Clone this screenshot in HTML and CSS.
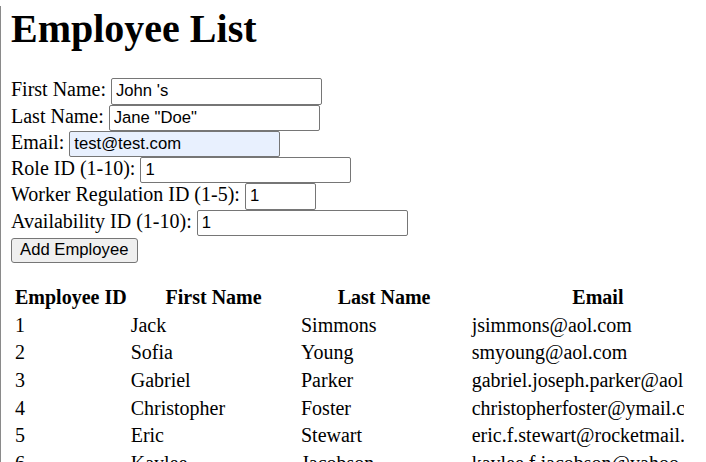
FILE: index.html
```html
<!DOCTYPE html>
<html lang="en">
<head>
<meta charset="utf-8">
<title>Employee List</title>
<link rel="stylesheet" href="styles.css">
</head>
<body>
<div class="page">
  <h1 class="title">Employee List</h1>
  <form class="emp-form">
    <div class="row"><label>First Name:</label><input class="field" type="text" value="John 's"></div>
    <div class="row"><label>Last Name:</label><input class="field" type="text" value="Jane &quot;Doe&quot;"></div>
    <div class="row"><label>Email:</label><input class="field autofill" type="text" value="test@test.com"></div>
    <div class="row"><label>Role ID (1-10):</label><input class="field" type="text" value="1"></div>
    <div class="row"><label>Worker Regulation ID (1-5):</label><input class="field narrow" type="text" value="1"></div>
    <div class="row"><label>Availability ID (1-10):</label><input class="field" type="text" value="1"></div>
    <div class="btn-row"><button class="btn" type="button">Add Employee</button></div>
  </form>
  <div class="table-clip">
    <table class="emp-table">
      <thead>
        <tr><th class="c1">Employee ID</th><th class="c2">First Name</th><th class="c3">Last Name</th><th class="c4">Email</th></tr>
      </thead>
      <tbody>
        <tr><td>1</td><td>Jack</td><td>Simmons</td><td>jsimmons@aol.com</td></tr>
        <tr><td>2</td><td>Sofia</td><td>Young</td><td>smyoung@aol.com</td></tr>
        <tr><td>3</td><td>Gabriel</td><td>Parker</td><td>gabriel.joseph.parker@aol.com</td></tr>
        <tr><td>4</td><td>Christopher</td><td>Foster</td><td>christopherfoster@ymail.com</td></tr>
        <tr><td>5</td><td>Eric</td><td>Stewart</td><td>eric.f.stewart@rocketmail.com</td></tr>
        <tr><td>6</td><td>Kaylee</td><td>Jacobson</td><td>kaylee.f.jacobson@yahoo.com</td></tr>
        <tr><td>7</td><td>Liam</td><td>Brooks</td><td>liam.brooks@aol.com</td></tr>
      </tbody>
    </table>
  </div>
</div>
</body>
</html>
```
FILE: styles.css
```css
html, body {
  margin: 0;
  padding: 0;
  overflow: hidden;
  background: #fff;
}
body {
  font-family: "Liberation Serif", "Times New Roman", serif;
  font-size: 20px;
  color: #000;
}
.page {
  border-left: 1px solid #8a8a8a;
  padding: 0 10px;
  min-height: 462px;
}
.title {
  font-size: 40px;
  font-weight: bold;
  line-height: 46px;
  margin: 5.5px 0 26.8px;
}
.emp-form {
  margin: 0;
}
.row {
  display: flex;
  align-items: baseline;
  gap: 5px;
  height: 26.25px;
  line-height: 23px;
}
.field {
  box-sizing: border-box;
  width: 211px;
  height: 26.25px;
  margin: 0;
  padding: 0 3px 0 4px;
  border: 1px solid #767676;
  border-radius: 2px;
  background: #fff;
  font-family: "Liberation Sans", Arial, sans-serif;
  font-size: 16.67px;
  color: #000;
}
.field.narrow {
  width: 71px;
}
.field.autofill {
  background: #e8f0fe;
}
.btn-row {
  padding-top: 1.5px;
}
.btn {
  box-sizing: border-box;
  height: 25.5px;
  width: 126.5px;
  margin: 0;
  padding: 0 7px;
  border: 1px solid #767676;
  border-radius: 3px;
  background: #efefef;
  font-family: "Liberation Sans", Arial, sans-serif;
  font-size: 16.67px;
  color: #000;
}
.table-clip {
  margin-top: 19.8px;
  width: 673px;
  overflow: hidden;
}
.emp-table {
  border-collapse: separate;
  border-spacing: 2px;
  table-layout: fixed;
  width: 715px;
  white-space: nowrap;
}
.emp-table th,
.emp-table td {
  padding: 1.3px 0.5px 1.3px 2px;
  line-height: 23px;
  text-align: left;
  vertical-align: middle;
}
.emp-table th {
  font-weight: bold;
  text-align: center;
}
.c1 { width: 111.2px; }
.c2 { width: 165.8px; }
.c3 { width: 166.2px; }
.c4 { width: 252.5px; }
```
